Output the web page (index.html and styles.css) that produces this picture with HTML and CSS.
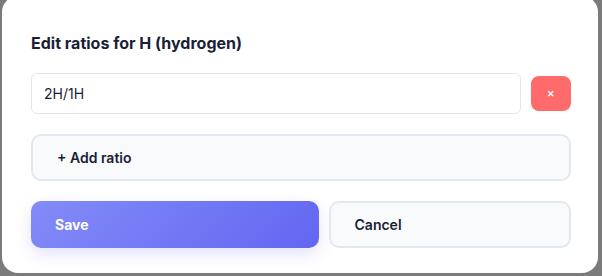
FILE: index.html
```html
<!DOCTYPE html>
<html lang="en">

<head>
    <meta charset="UTF-8">
    <meta name="viewport" content="width=device-width, initial-scale=1.0">
    <title>Edit ratios</title>
    <link rel="stylesheet" href="styles.css">
</head>

<body>
    <!-- Ratio editor modal -->
    <div class="modal">
        <h3 class="modal-title">Edit ratios for H (hydrogen)</h3>

        <div class="ratio-list">
            <div class="ratio-row">
                <input class="ratio-input" type="text" value="2H/1H">
                <button class="remove-button">&#x2715;</button>
            </div>
        </div>

        <button class="add-button">+ Add ratio</button>

        <div class="actions">
            <button class="save-button">Save</button>
            <button class="cancel-button">Cancel</button>
        </div>
    </div>
</body>
</html>
```

FILE: styles.css
```css
body {
    margin: 0;
    height: 100vh;
    overflow: hidden;
    background-color: #7b7b7b;
    font-family: Inter, "Noto Sans", sans-serif;
}

.modal {
    box-sizing: border-box;
    height: 277px;
    margin: -4px 4px 0 2px;
    padding: 37px 27px 0 29px;
    background-color: #fff;
    border-radius: 16px;
}

.modal-title {
    margin: 0 0 20px 0;
    font-size: 16px;
    line-height: 20px;
    font-weight: 700;
    color: #1a1f36;
}

.ratio-row {
    display: flex;
    align-items: center;
    gap: 10px;
}

.ratio-input {
    flex: 1;
    box-sizing: border-box;
    height: 41px;
    padding: 0 12px;
    border: 1px solid #e2e8f0;
    border-radius: 6px;
    font-family: inherit;
    font-size: 14px;
    color: #1a1f36;
    outline: none;
}

.remove-button {
    width: 40px;
    height: 35px;
    border: none;
    border-radius: 8px;
    background-color: #ff6b6b;
    color: #fff;
    font-size: 9px;
    font-weight: 700;
    cursor: pointer;
}

.add-button,
.cancel-button {
    box-sizing: border-box;
    height: 47px;
    padding: 0 24px;
    border: 2px solid #e2e8f0;
    border-radius: 10px;
    background-color: #f8fafc;
    color: #1a1f36;
    font-family: inherit;
    font-size: 14px;
    font-weight: 600;
    text-align: left;
    cursor: pointer;
}

.add-button {
    display: block;
    width: 100%;
    margin-top: 20px;
}

.actions {
    display: grid;
    grid-template-columns: 287fr 242fr;
    gap: 10px;
    margin-top: 20px;
}

.save-button {
    height: 47px;
    padding: 0 24px;
    border: none;
    border-radius: 10px;
    background: linear-gradient(135deg, #838cf8, #6366f1);
    box-shadow: 0 6px 16px rgba(99, 102, 241, 0.18);
    color: #fff;
    font-family: inherit;
    font-size: 14px;
    font-weight: 700;
    text-align: left;
    cursor: pointer;
}
```
